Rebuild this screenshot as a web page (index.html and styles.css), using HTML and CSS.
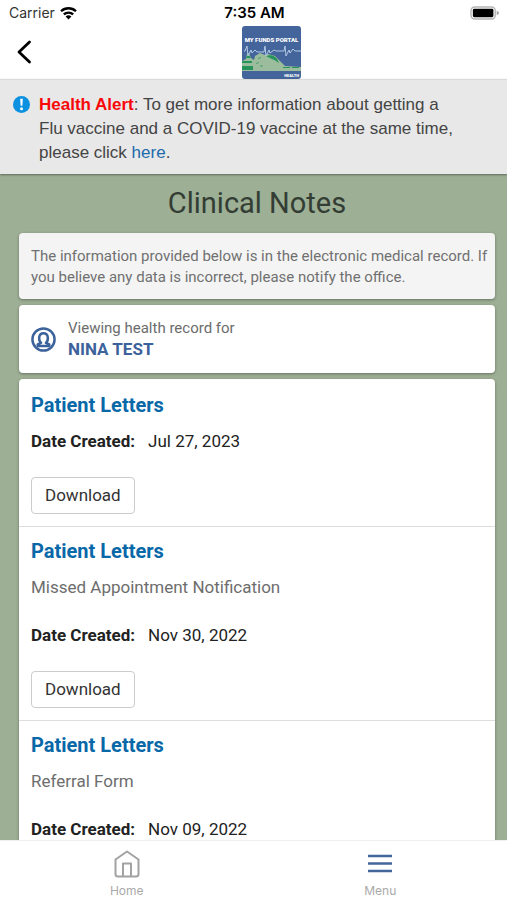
FILE: index.html
```html
<!DOCTYPE html>
<html lang="en">
<head>
  <meta charset="utf-8">
  <meta name="viewport" content="width=device-width, initial-scale=1">
  <title>Clinical Notes</title>
  <link rel="stylesheet" href="styles.css">
</head>
<body>
  <header class="header">
    <div class="status">
      <div class="status-carrier">
        <span>Carrier</span>
        <svg class="wifi" viewBox="0 0 20 15" aria-hidden="true">
          <path d="M2 5.6a11.6 11.6 0 0 1 16 0M5 9a7.300 7.300 0 0 1 10 0" fill="none" stroke="#000" stroke-width="2.500"/>
          <path d="M10 14.500 6.900 11.300a4.500 4.500 0 0 1 6.200 0z"/>
        </svg>
      </div>
      <span class="status-time">7:35 AM</span>
      <svg class="battery" viewBox="0 0 32 15" aria-hidden="true">
        <rect x="1" y="1" width="26" height="13" rx="4" fill="#fff" stroke="#b5b5b5" stroke-width="1.500"/>
        <rect x="3" y="3" width="22" height="9" rx="1.500"/>
        <path d="M28.500 5v5q2.500-1 2.500-2.500t-2.500-2.500z" fill="#a5a5a5"/>
      </svg>
    </div>
    <div class="nav">
      <button class="back" type="button" aria-label="Back">
        <svg viewBox="0 0 16 26" aria-hidden="true"><path d="M13.500 2 3 12l10.500 10" fill="none" stroke="#000" stroke-width="2.800" stroke-linecap="round" stroke-linejoin="round"/></svg>
      </button>
      <svg class="logo" viewBox="0 0 59 53" role="img" aria-label="My Funds Portal Health">
        <clipPath id="logo-shape"><rect width="59" height="53" rx="3"/></clipPath>
        <g clip-path="url(#logo-shape)">
          <rect width="59" height="53" fill="#44659b"/>
          <path d="M0 45V35l4-2 1-5 2-1 2 5 3 2 1-4 5-3 5 2 3-1 7 2 6 6 4 4 16 1v4z" fill="#9cbd9d"/>
          <path d="M0 35h10v2H0zm0 5h11v4H0zM4 32l2-4 3 4zM24 30c5-2 11 0 13 7-5-4-8-4-13-7zm17 11h7v1h-7zm9 0h7v1h-7z" fill="#25935b"/>
          <path d="M16 32l3-1v1l-3 1zm-2 5 3-1v1l-3 1zm5 2 2 1-1 1-2-1z" fill="#4aa16f"/>
          <path d="M2 25h1l2-5 1 10 3-6 1 3 3-3 2 2h7l1-6 1 10 3-6 1 3 4-3 2 1h8l1-5 1 10 3-6 1 3 3-4 2 2h6" fill="none" stroke="#b3c9e4" stroke-width="1"/>
          <text class="logo-name" x="29.500" y="16" text-anchor="middle">MY FUNDS PORTAL</text>
          <text class="logo-tag" x="57" y="51" text-anchor="end">HEALTH</text>
        </g>
      </svg>
    </div>
  </header>

  <section class="alert">
    <svg class="alert-icon" viewBox="0 0 17 17" aria-hidden="true">
      <circle cx="8.500" cy="8.500" r="8.500" fill="#0b91e0"/>
      <path d="M7.200 2.800h2.600l-.4 7H7.600z" fill="#fff"/>
      <circle cx="8.500" cy="12.700" r="1.500" fill="#fff"/>
    </svg>
    <p class="alert-text"><strong>Health Alert</strong>: To get more information about getting a Flu vaccine and a COVID-19 vaccine at the same time, please click <a href="#vaccines">here</a>.</p>
  </section>

  <main class="main">
    <h1 class="title">Clinical Notes</h1>
    <p class="card notice">The information provided below is in the electronic medical record. If you believe any data is incorrect, please notify the office.</p>
    <section class="card patient">
      <svg class="patient-icon" viewBox="0 0 26 26" aria-hidden="true">
        <g fill="none" stroke="#3c629b" stroke-width="2.600">
          <circle cx="13" cy="13" r="11.500"/>
          <path d="M10.500 16.500C7.500 14 7.500 6.500 13 6.500s5.500 7.500 2.500 10l3.500 1.500v1.800H7V18z" stroke-linejoin="round"/>
        </g>
      </svg>
      <div>
        <div class="patient-label">Viewing health record for</div>
        <div class="patient-name">NINA TEST</div>
      </div>
    </section>
    <section class="card records">
      <article class="record">
        <h2><a href="#letter-1">Patient Letters</a></h2>
        <p class="date"><strong>Date Created:</strong><span>Jul 27, 2023</span></p>
        <button class="download" type="button">Download</button>
      </article>
      <article class="record">
        <h2><a href="#letter-2">Patient Letters</a></h2>
        <p class="kind">Missed Appointment Notification</p>
        <p class="date"><strong>Date Created:</strong><span>Nov 30, 2022</span></p>
        <button class="download" type="button">Download</button>
      </article>
      <article class="record">
        <h2><a href="#letter-3">Patient Letters</a></h2>
        <p class="kind">Referral Form</p>
        <p class="date"><strong>Date Created:</strong><span>Nov 09, 2022</span></p>
      </article>
    </section>
  </main>

  <nav class="tabs">
    <a class="tab" href="#home">
      <svg viewBox="0 0 28 28" aria-hidden="true"><path d="M2.500 9.500 14 1.500l11.500 8V24a2.500 2.500 0 0 1-2.500 2.500H5A2.500 2.500 0 0 1 2.500 24zM10 26V13.500h8V26" fill="none" stroke="#a2a2a2" stroke-width="2" stroke-linejoin="round"/></svg>
      <span>Home</span>
    </a>
    <a class="tab" href="#menu">
      <svg viewBox="0 0 28 28" aria-hidden="true"><path d="M2 6h24M2 13.500h24M2 21h24" stroke="#43669b" stroke-width="2.400"/></svg>
      <span>Menu</span>
    </a>
  </nav>
</body>
</html>
```

FILE: styles.css
```css
* {
  box-sizing: border-box;
}

html,
body {
  height: 100%;
}

body {
  margin: 0;
  display: flex;
  flex-direction: column;
  overflow: hidden;
  background: #9daf95;
  color: #222;
  font-family: Roboto, "Liberation Sans", sans-serif;
  font-size: 17px;
  line-height: 24px;
}

h1,
h2,
p {
  margin: 0;
}

a {
  color: #0868a8;
  text-decoration: none;
}

button {
  font: inherit;
  color: inherit;
}

.header {
  flex: none;
  background: #fff;
}

.status {
  display: grid;
  grid-template-columns: 1fr auto 1fr;
  align-items: center;
  height: 26px;
  padding: 0 7px 0 9px;
  color: #000;
  font-family: Inter, sans-serif;
  font-size: 15px;
}

.status-carrier {
  display: flex;
  align-items: center;
  gap: 4px;
  color: #333;
  font-size: 14px;
}

.wifi {
  width: 19px;
  height: 14px;
}

.status-time {
  font-weight: 600;
}

.battery {
  justify-self: end;
  width: 30px;
  height: 14px;
}

.nav {
  display: flex;
  align-items: center;
}

.back {
  flex: none;
  padding: 0 4px 0 16px;
  border: 0;
  background: none;
}

.back svg {
  display: block;
  width: 16px;
  height: 26px;
}

.logo {
  width: 59px;
  height: 53px;
  margin: 0 auto;
}

.logo-name,
.logo-tag {
  fill: #fff;
  font-family: Roboto, sans-serif;
  font-weight: 900;
}

.logo-name {
  font-size: 6px;
}

.logo-tag {
  font-size: 4px;
}

.alert {
  flex: none;
  display: flex;
  gap: 9px;
  padding: 13px 48px 9px 13px;
  border-top: 1px solid #dadada;
  background: #e8e8e8;
  box-shadow: 0 1px 2px rgba(0, 0, 0, 0.4);
  color: #444;
  font-family: "Liberation Sans", sans-serif;
}

.alert-icon {
  flex: none;
  width: 17px;
  height: 17px;
  margin-top: 3px;
}

.alert-text strong {
  color: #f80808;
}

.alert-text a {
  color: #1c69ac;
}

.main {
  flex: 1;
  min-height: 0;
  overflow: hidden;
  display: flex;
  flex-direction: column;
  gap: 6px;
  padding: 11px 12px 0 19px;
}

.main > * {
  flex: none;
}

.title {
  padding-bottom: 6px;
  color: #333d34;
  font-size: 29px;
  font-weight: 400;
  line-height: 36px;
  text-align: center;
}

.card {
  border-radius: 4px;
  background: #fff;
  box-shadow: 0 1px 3px rgba(0, 0, 0, 0.35);
}

.notice {
  padding: 13px 4px 11px 12px;
  background: #f4f4f4;
  color: #707070;
  font-size: 15px;
  line-height: 21px;
}

.patient {
  display: flex;
  align-items: center;
  gap: 12px;
  padding: 13px 12px;
}

.patient-icon {
  width: 25px;
  height: 25px;
}

.patient-label,
.patient-name {
  line-height: 21px;
}

.patient-label {
  color: #6c6c6c;
  font-size: 15px;
}

.patient-name {
  color: #3c629b;
  font-weight: 700;
}

.records {
  padding-top: 2px;
}

.record {
  padding: 12px;
  border-bottom: 1px solid #dedede;
}

.record h2 {
  font-size: 20px;
  font-weight: 700;
  line-height: 24px;
}

.date {
  display: flex;
  gap: 13px;
  margin-top: 12px;
}

.kind {
  margin-top: 12px;
  color: #6d6d6d;
}

.kind + .date {
  margin-top: 24px;
}

.download {
  display: block;
  height: 37px;
  margin-top: 24px;
  padding: 0 13px 2px;
  border: 1px solid #ccc;
  border-radius: 4px;
  background: #fff;
  color: #333;
}

.tabs {
  flex: none;
  display: grid;
  grid-template-columns: 1fr 1fr;
  border-top: 1px solid #f0f0f0;
  background: #fff;
}

.tab {
  display: flex;
  flex-direction: column;
  align-items: center;
  gap: 5px;
  padding: 9px 0 1px;
  color: #aaa;
  font-family: Inter, sans-serif;
  font-size: 12px;
  line-height: 16px;
}

.tab svg {
  width: 28px;
  height: 28px;
}
```
